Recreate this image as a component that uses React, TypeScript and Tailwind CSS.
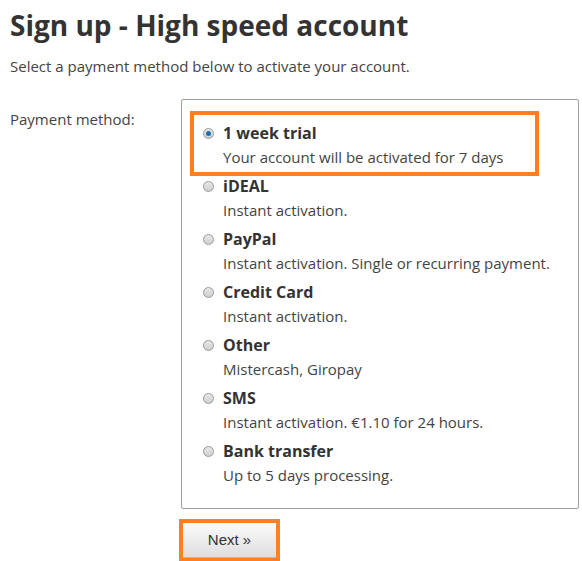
import React from 'react';

const methods = [
  { title: '1 week trial', desc: 'Your account will be activated for 7 days', checked: true },
  { title: 'iDEAL', desc: 'Instant activation.' },
  { title: 'PayPal', desc: 'Instant activation. Single or recurring payment.' },
  { title: 'Credit Card', desc: 'Instant activation.' },
  { title: 'Other', desc: 'Mistercash, Giropay' },
  { title: 'SMS', desc: 'Instant activation. €1.10 for 24 hours.' },
  { title: 'Bank transfer', desc: 'Up to 5 days processing.' },
];

const Radio: React.FC<{ checked?: boolean }> = ({ checked }) => (
  <span className="mt-[7px] flex h-[11px] w-[11px] shrink-0 items-center justify-center rounded-full border border-[#9a9a9a] bg-gradient-to-b from-[#e8e8e8] to-[#cfcfcf]">
    {checked && <span className="h-[5px] w-[5px] rounded-full bg-[#1c6fb5]" />}
  </span>
);

const Method: React.FC<{ title: string; desc: string; checked?: boolean }> = ({ title, desc, checked }) => (
  <div className="flex gap-[9px]">
    <Radio checked={checked} />
    <div>
      <div className="text-[16px] font-bold leading-[24px] text-[#333]">{title}</div>
      <div className="text-[15px] leading-[24px] text-[#444]">{desc}</div>
    </div>
  </div>
);

export default function App() {
  return (
    <div className="h-[561px] w-[582px] overflow-hidden bg-white pl-[10px] font-['Open_Sans',sans-serif] text-[#333]">
      <h1 className="pt-[5px] text-[28px] font-bold leading-[40px] text-[#333]">Sign up - High speed account</h1>
      <p className="mt-[10px] text-[15px] leading-[22px] text-[#444]">
        Select a payment method below to activate your account.
      </p>
      <div className="mt-[22px] flex">
        <div className="w-[171px] pt-[8px] text-[15px] leading-[24px] text-[#444]">Payment method:</div>
        <div className="w-[398px]">
          <div className="h-[410px] rounded-[2px] border border-[#a0a0a0] pl-[8px] pt-[11px]">
            <div className="w-[349px] border-4 border-[#ff7f27] pl-[9px] pt-[6px] pb-[3px]">
              <Method {...methods[0]} />
            </div>
            <div className="mt-[-2px] flex flex-col gap-[5px] pl-[13px]">
              {methods.slice(1).map((m) => (
                <Method key={m.title} {...m} />
              ))}
            </div>
          </div>
          <div className="ml-[-2px] mt-[10px] inline-block border-4 border-[#ff7f27]">
            <button className="h-[35px] w-[93px] border-b border-[#bbb] bg-gradient-to-b from-[#fbfbfb] to-[#dedede] font-['Liberation_Sans',sans-serif] text-[15px] text-[#333]">
              Next »
            </button>
          </div>
        </div>
      </div>
    </div>
  );
}
